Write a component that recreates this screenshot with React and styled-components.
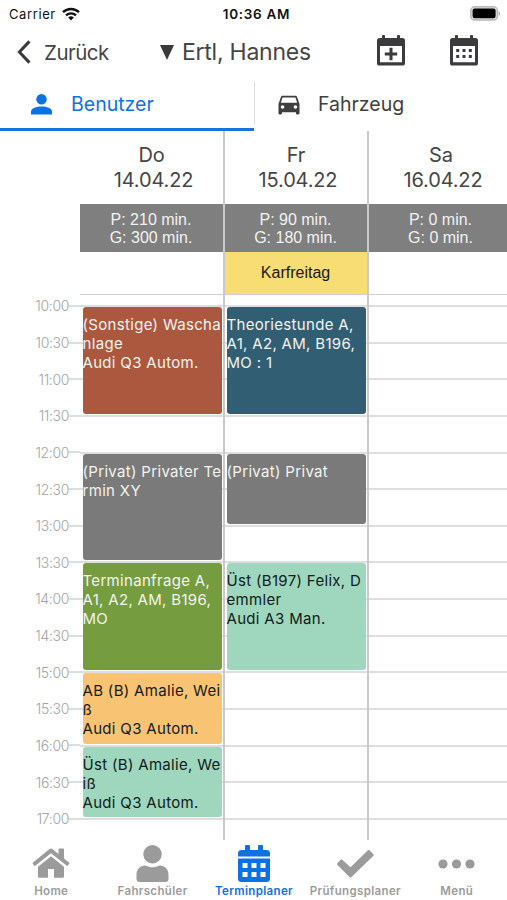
import React from "react";
import styled, { createGlobalStyle } from "styled-components";
import { MdDirectionsCar } from "react-icons/md";

const SLOT_HEIGHT = 36.64;
const SLOTS = [
  "10:00",
  "10:30",
  "11:00",
  "11:30",
  "12:00",
  "12:30",
  "13:00",
  "13:30",
  "14:00",
  "14:30",
  "15:00",
  "15:30",
  "16:00",
  "16:30",
  "17:00",
];

const DAYS = [
  {
    name: "Do",
    date: "14.04.22",
    totals: ["P: 210 min.", "G: 300 min."],
    events: [
      {
        from: "10:00",
        to: "11:30",
        color: "#ab583e",
        lines: ["(Sonstige) Wascha", "nlage", "Audi Q3 Autom."],
      },
      {
        from: "12:00",
        to: "13:30",
        color: "#7a7a7a",
        lines: ["(Privat) Privater Te", "rmin XY"],
      },
      {
        from: "13:30",
        to: "15:00",
        color: "#759c3e",
        lines: ["Terminanfrage A,", "A1, A2, AM, B196,", "MO"],
      },
      {
        from: "15:00",
        to: "16:00",
        color: "#f9c374",
        dark: true,
        lines: ["AB (B) Amalie, Wei", "ß", "Audi Q3 Autom."],
      },
      {
        from: "16:00",
        to: "17:00",
        color: "#9ed7be",
        dark: true,
        lines: ["Üst (B) Amalie, We", "iß", "Audi Q3 Autom."],
      },
    ],
  },
  {
    name: "Fr",
    date: "15.04.22",
    totals: ["P: 90 min.", "G: 180 min."],
    holiday: "Karfreitag",
    events: [
      {
        from: "10:00",
        to: "11:30",
        color: "#325e74",
        lines: ["Theoriestunde A,", "A1, A2, AM, B196,", "MO : 1"],
      },
      {
        from: "12:00",
        to: "13:00",
        color: "#7a7a7a",
        lines: ["(Privat) Privat"],
      },
      {
        from: "13:30",
        to: "15:00",
        color: "#9ed7be",
        dark: true,
        lines: ["Üst (B197) Felix, D", "emmler", "Audi A3 Man."],
      },
    ],
  },
  {
    name: "Sa",
    date: "16.04.22",
    totals: ["P: 0 min.", "G: 0 min."],
    events: [],
  },
];

const slotRow = (time) => SLOTS.indexOf(time) + 1;

const WifiIcon = () => (
  <svg width="18" height="14" viewBox="0 0 18 14" fill="none" stroke="#111">
    <path d="M1 5.2a11.6 11.6 0 0 1 16 0" strokeWidth="2.4" />
    <path d="M4 8.4a7.3 7.3 0 0 1 10 0" strokeWidth="2.3" />
    <path d="M9 13.4l-2.8-2.9a4 4 0 0 1 5.6 0z" fill="#111" stroke="none" />
  </svg>
);

const BatteryIcon = () => (
  <svg width="31" height="15" viewBox="0 0 31 15">
    <rect x="0.8" y="0.8" width="26.6" height="13.2" rx="3.8" fill="#ddd" stroke="#b8b8b8" strokeWidth="1.4" />
    <rect x="2.6" y="2.5" width="23" height="9.8" rx="2.2" fill="#000" />
    <path d="M28.6 5.2c2 .8 2 3.8 0 4.6z" fill="#b0b0b0" />
  </svg>
);

const BackIcon = () => (
  <svg width="14" height="24" viewBox="0 0 14 24" fill="none" stroke="#3a3a3a" strokeWidth="3">
    <path d="M12.4 1.4L2.4 12l10 10.6" />
  </svg>
);

const CalendarFrame = ({ children }) => (
  <svg width="28" height="31" viewBox="0 0 28 31" fill="#3b3b3d">
    <rect x="5" y="0" width="3" height="6" rx="1" />
    <rect x="20" y="0" width="3" height="6" rx="1" />
    <path
      fillRule="evenodd"
      d="M2.6 3h22.8A2.6 2.6 0 0 1 28 5.6V28a2.6 2.6 0 0 1-2.6 2.6H2.6A2.6 2.6 0 0 1 0 28V5.6A2.6 2.6 0 0 1 2.6 3zM3 11v16.2h22V11z"
    />
    {children}
  </svg>
);

const CalendarAddIcon = () => (
  <CalendarFrame>
    <path d="M12.5 12.8h3v4.7h4.7v3h-4.7v4.7h-3v-4.7H7.8v-3h4.7z" />
  </CalendarFrame>
);

const CalendarDotsIcon = () => (
  <CalendarFrame>
    {[14, 20].map((y) =>
      [6.2, 12.5, 18.8].map((x) => (
        <rect key={`${x}-${y}`} x={x} y={y} width="3" height="3" />
      ))
    )}
  </CalendarFrame>
);

const UserIcon = () => (
  <svg width="21" height="21" viewBox="0 0 21 21" fill="currentColor">
    <circle cx="10.5" cy="5.3" r="5.2" />
    <path d="M0 20.5v-2.7c0-3.6 5.6-5.2 10.5-5.2S21 14.2 21 17.8v2.7z" />
  </svg>
);

const HomeIcon = () => (
  <svg width="38" height="31" viewBox="0 0 38 31" fill="currentColor">
    <path d="M19 8.2L32 18.8V28.5a1.3 1.3 0 0 1-1.3 1.3H22V21h-6v8.800H7.300A1.300 1.300 0 0 1 6 28.500V18.800z" />
    <path d="M19 .6c.7 0 1.200.2 1.700.6L26.500 6V1.500c0-.6.4-1 1-1H31c.6 0 1 .4 1 1v9l5 4.100c.5.400.5 1 .1 1.500l-1.200 1.400c-.4.500-1 .5-1.500.1L19 5.200 3.600 17.600c-.5.400-1.100.4-1.500-.1L.9 16.100c-.4-.5-.4-1.100.1-1.500L17.300 1.200c.5-.4 1-.6 1.700-.6z" />
  </svg>
);

const StudentIcon = () => (
  <svg width="33" height="37" viewBox="0 0 33 37" fill="currentColor">
    <circle cx="16.5" cy="9.2" r="9.2" />
    <path d="M9.500 20.500c4.500 2.400 9.500 2.400 14 0 5.500 0 9 4 9 9v4.300a3.200 3.200 0 0 1-3.200 3.200H3.700a3.200 3.200 0 0 1-3.200-3.200v-4.300c0-5 3.500-9 9-9z" />
  </svg>
);

const PlannerIcon = () => (
  <svg width="32" height="37" viewBox="0 0 32 37" fill="currentColor">
    <path d="M3.500 5H7V1.200C7 .5 7.500 0 8.200 0h2.600c.7 0 1.200.5 1.200 1.200V5h8V1.200c0-.7.500-1.200 1.200-1.200h2.600c.7 0 1.200.5 1.200 1.200V5h3.500A3.500 3.500 0 0 1 32 8.500V11.500H0V8.500A3.500 3.500 0 0 1 3.500 5z" />
    <path
      fillRule="evenodd"
      d="M0 13.500h32v20a3.500 3.500 0 0 1-3.500 3.500h-25A3.500 3.500 0 0 1 0 33.500zM4.500 18v5h5v-5zM13.500 18v5h5v-5zM22.500 18v5h5v-5zM4.500 27v5h5v-5zM13.500 27v5h5v-5zM22.500 27v5h5v-5z"
    />
  </svg>
);

const CheckIcon = () => (
  <svg width="37" height="28" viewBox="0 0 37 28" fill="currentColor">
    <path d="M.5 14.900c-.6-.6-.6-1.400 0-2l3-3c.6-.6 1.400-.6 2 0l8 7.300L30.700.500c.6-.6 1.400-.6 2 0l3.500 3.500c.6.600.6 1.400 0 2L14.500 27c-.6.600-1.400.6-2 0z" />
  </svg>
);

const MoreIcon = () => (
  <svg width="37" height="10" viewBox="0 0 37 10" fill="currentColor">
    <circle cx="5" cy="5" r="4.6" />
    <circle cx="18.5" cy="5" r="4.6" />
    <circle cx="32" cy="5" r="4.6" />
  </svg>
);

const NAV_ITEMS = [
  { label: "Home", icon: HomeIcon },
  { label: "Fahrschüler", icon: StudentIcon },
  { label: "Terminplaner", icon: PlannerIcon, active: true },
  { label: "Prüfungsplaner", icon: CheckIcon },
  { label: "Menü", icon: MoreIcon },
];

const Day = ({ day, last }) => (
  <DayColumn $last={last}>
    <DayHead>
      <span>{day.name}</span>
      <span>{day.date}</span>
    </DayHead>
    <Totals>
      {day.totals.map((total) => (
        <span key={total}>{total}</span>
      ))}
    </Totals>
    <Holiday $filled={!!day.holiday}>{day.holiday}</Holiday>
    <SlotGrid>
      {SLOTS.map((time) => (
        <Slot key={time} style={{ gridRow: slotRow(time) }} />
      ))}
      {day.events.map((event) => (
        <Event
          key={event.from}
          $color={event.color}
          $dark={event.dark}
          style={{ gridRow: `${slotRow(event.from)} / ${slotRow(event.to)}` }}
        >
          {event.lines.map((line) => (
            <div key={line}>{line}</div>
          ))}
        </Event>
      ))}
    </SlotGrid>
  </DayColumn>
);

const App = () => (
  <Screen>
    <GlobalStyle />
    <StatusBar>
      <Carrier>
        Carrier <WifiIcon />
      </Carrier>
      <Clock>10:36 AM</Clock>
      <Battery>
        <BatteryIcon />
      </Battery>
    </StatusBar>

    <TitleBar>
      <BackButton>
        <BackIcon />
        Zurück
      </BackButton>
      <UserSelect>
        <Triangle />
        Ertl, Hannes
      </UserSelect>
      <Actions>
        <CalendarAddIcon />
        <CalendarDotsIcon />
      </Actions>
    </TitleBar>

    <Tabs>
      <Tab $active>
        <UserIcon />
        <TabLabel $left={19}>Benutzer</TabLabel>
      </Tab>
      <Tab>
        <MdDirectionsCar size={28} />
        <TabLabel $left={15}>Fahrzeug</TabLabel>
      </Tab>
    </Tabs>

    <Planner>
      <TimeAxis>
        {SLOTS.map((time) => (
          <TimeLabel key={time}>
            {time}
            <Tick />
          </TimeLabel>
        ))}
      </TimeAxis>
      {DAYS.map((day, i) => (
        <Day key={day.date} day={day} last={i === DAYS.length - 1} />
      ))}
    </Planner>

    <BottomNav>
      {NAV_ITEMS.map(({ label, icon: Icon, active }) => (
        <NavItem key={label} $active={active}>
          <NavIcon>
            <Icon />
          </NavIcon>
          {label}
        </NavItem>
      ))}
    </BottomNav>
  </Screen>
);

export default App;

const GlobalStyle = createGlobalStyle`
  * {
    box-sizing: border-box;
  }

  body {
    margin: 0;
    background: #fff;
  }

  svg {
    display: block;
    flex-shrink: 0;
  }
`;

const Screen = styled.div`
  display: flex;
  flex-direction: column;
  width: 507px;
  height: 900px;
  overflow: hidden;
  background: #fff;
  color: #454547;
  font-family: Inter, "Liberation Sans", sans-serif;
  white-space: nowrap;
`;

const StatusBar = styled.div`
  display: grid;
  grid-template-columns: 1fr auto 1fr;
  align-items: center;
  height: 28px;
  padding: 0 6px 1px 9px;
  color: #111;
  font-size: 13px;
`;

const Carrier = styled.div`
  display: flex;
  align-items: center;
  gap: 6px;
  letter-spacing: 0.6px;
`;

const Clock = styled.div`
  padding-left: 3px;
  font-size: 13.5px;
  font-weight: 600;
  letter-spacing: 0.7px;
`;

const Battery = styled.div`
  justify-self: end;
`;

const TitleBar = styled.header`
  display: flex;
  align-items: center;
  height: 54px;
  padding: 0 29px 6px 17px;
`;

const BackButton = styled.div`
  display: flex;
  align-items: center;
  gap: 13px;
  width: 143px;
  font-size: 20.5px;
  letter-spacing: -0.5px;
`;

const UserSelect = styled.div`
  display: flex;
  align-items: center;
  flex: 1;
  gap: 8px;
  font-size: 23px;
  letter-spacing: -0.25px;
`;

const Triangle = styled.span`
  border: 7.5px solid transparent;
  border-top: 15px solid #3a3a3a;
  border-bottom: 0;
`;

const Actions = styled.div`
  display: flex;
  gap: 45px;
  padding-bottom: 3px;
`;

const Tabs = styled.nav`
  display: flex;
  height: 49px;
`;

const Tab = styled.div`
  display: flex;
  align-items: center;
  width: ${({ $active }) => ($active ? "254px" : "253px")};
  padding-left: ${({ $active }) => ($active ? "31px" : "21px")};
  padding-bottom: ${({ $active }) => ($active ? "2px" : "5px")};
  border-bottom: ${({ $active }) => ($active ? "3px solid #1a73dc" : "0")};
  color: ${({ $active }) => ($active ? "#0a72e4" : "#3f3f41")};
  background: ${({ $active }) =>
    $active ? "none" : "linear-gradient(#dcdcdc, #dcdcdc) 0 0 / 1px 43px no-repeat"};
`;

const TabLabel = styled.span`
  padding-left: ${({ $left }) => $left}px;
  font-size: 19.5px;
`;

const Planner = styled.main`
  display: grid;
  grid-template-columns: 80px 145px 144px 144px;
  height: 709px;
  overflow: hidden;
`;

const TimeAxis = styled.div`
  padding-top: 156.68px;
`;

const TimeLabel = styled.div`
  display: flex;
  align-items: center;
  justify-content: flex-end;
  height: ${SLOT_HEIGHT}px;
  color: #a4a4a4;
  font-size: 14px;
  font-weight: 300;
  letter-spacing: -0.35px;
`;

const Tick = styled.span`
  width: 11px;
  height: 2px;
  background: #dedede;
`;

const DayColumn = styled.section`
  display: flex;
  flex-direction: column;
  height: 709px;
  border-right: ${({ $last }) => ($last ? "0" : "2px solid #c9c9c9")};
`;

const DayHead = styled.div`
  display: flex;
  flex-direction: column;
  align-items: center;
  flex: 0 0 73px;
  padding: 12px 0 0 4px;
  font-size: 20px;
  line-height: 24.5px;
  letter-spacing: -0.15px;

  span:first-child {
    padding-right: 4px;
  }
`;

const Totals = styled.div`
  display: flex;
  flex-direction: column;
  align-items: center;
  flex: 0 0 48px;
  padding: 7px 1px 0 0;
  background: #7f7f7f;
  color: #f2f2f2;
  font-family: "Liberation Sans", Arial, sans-serif;
  font-size: 16px;
  line-height: 17.5px;
`;

const Holiday = styled.div`
  display: flex;
  align-items: center;
  justify-content: center;
  flex: 0 0 43px;
  padding-right: 1px;
  border-bottom: 1px solid #cfcfcf;
  background: ${({ $filled }) => ($filled ? "#f7dd74" : "none")};
  color: #1a1a10;
  font-family: "Liberation Sans", Arial, sans-serif;
  font-size: 16px;
`;

const SlotGrid = styled.div`
  display: grid;
  grid-template-columns: 100%;
  grid-template-rows: repeat(${SLOTS.length}, ${SLOT_HEIGHT}px);
  margin-top: 10px;
`;

const Slot = styled.div`
  grid-column: 1;
  border-top: 2px solid #dedede;
`;

const Event = styled.article`
  grid-column: 1;
  justify-self: end;
  width: 139px;
  margin: 2px 1.5px 1px 0;
  padding-top: 8px;
  border-radius: 3px;
  background: ${({ $color }) => $color};
  color: ${({ $dark }) => ($dark ? "#10201a" : "#f3f3f0")};
  font-size: 15px;
  line-height: 19px;
  letter-spacing: 0.32px;
`;

const BottomNav = styled.footer`
  display: grid;
  grid-template-columns: repeat(5, 1fr);
  height: 60px;
  background: #fff;
`;

const NavItem = styled.div`
  display: flex;
  flex-direction: column;
  align-items: center;
  padding-left: 1px;
  color: ${({ $active }) => ($active ? "#0a72e4" : "#9b9b9b")};
  font-size: 11.5px;
  font-weight: 600;
  letter-spacing: 0.35px;
`;

const NavIcon = styled.div`
  display: flex;
  align-items: center;
  height: 37px;
  margin: 5px 0 2px;
`;
